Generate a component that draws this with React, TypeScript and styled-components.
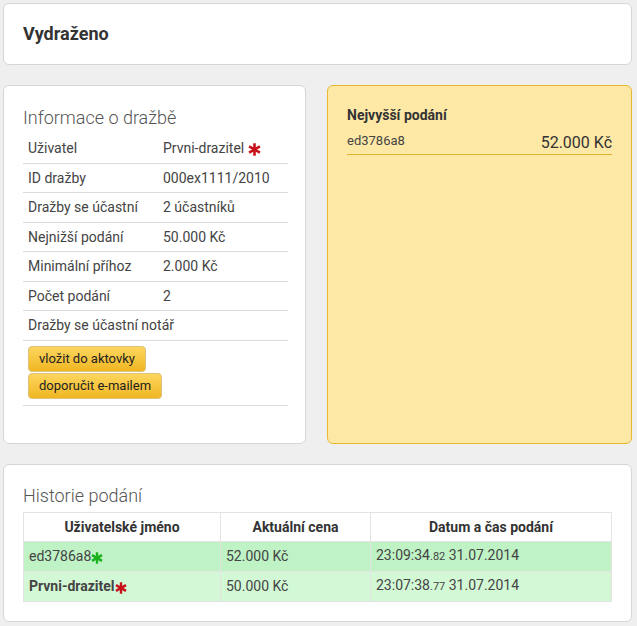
import styled, { createGlobalStyle } from "styled-components";

const GlobalStyle = createGlobalStyle`
    html, body {
        margin: 0;
        padding: 0;
        background: #efefef;
    }
    body {
        font-family: Roboto, "Liberation Sans", Arial, sans-serif;
        color: #444;
    }
`;

const Page = styled.div`
    display: flex;
    flex-direction: column;
    gap: 20px;
    padding: 3px 5px 5px 3px;
`;

const Panel = styled.div`
    background: #fff;
    border: 1px solid #d6d6d6;
    border-radius: 6px;
    padding: 20px 19px 19px 19px;
`;

const HeaderPanel = styled(Panel)`
    padding: 20px 19px;
`;

const HistoryPanel = styled(Panel)`
    padding: 19px 19px 19px 19px;
`;

const PageTitle = styled.h1`
    margin: 0;
    font-size: 18px;
    line-height: 20px;
    font-weight: 700;
    color: #333;
`;

const Columns = styled.div`
    display: grid;
    grid-template-columns: 303px 305px;
    gap: 21px;
`;

const InfoPanel = styled(Panel)`
    padding: 20px 17px 37px 19px;
`;

const SectionTitle = styled.h2`
    margin: 0 0 4px;
    font-size: 18px;
    line-height: 24px;
    font-weight: 300;
    color: #555;
`;

const InfoTable = styled.table`
    width: 100%;
    border-collapse: collapse;
    font-size: 14px;
    color: #444;

    td {
        height: 28.5px;
        padding: 0 5px;
        line-height: 20px;
        border-bottom: 1px solid #dcdcdc;
        vertical-align: middle;
    }
    td:first-child {
        width: 125px;
    }
`;

const ButtonCell = styled.td`
    && {
        padding: 5px 5px 6px;
    }
`;

const ButtonStack = styled.div`
    display: flex;
    flex-direction: column;
    align-items: flex-start;
    gap: 1px;
`;

const YellowButton = styled.button`
    height: 26px;
    padding: 0 10px;
    font-family: Roboto, "Liberation Sans", Arial, sans-serif;
    font-size: 13px;
    color: #222;
    background: linear-gradient(#fdd65f, #f0b622);
    border: 1px solid #dcc27a;
    border-radius: 4px;
    cursor: pointer;
`;

const BidPanel = styled.div`
    background: #fee8a6;
    border: 1px solid #eab731;
    border-radius: 6px;
    padding: 20px 19px;
`;

const BidTitle = styled.h3`
    margin: 0;
    font-size: 14px;
    line-height: 18px;
    font-weight: 700;
    color: #333;
`;

const BidRow = styled.div`
    display: flex;
    justify-content: space-between;
    align-items: flex-start;
    margin-top: 8px;
    border-bottom: 1px solid #e3b22c;
`;

const BidUser = styled.span`
    font-size: 13px;
    line-height: 18px;
    color: #444;
`;

const BidPrice = styled.span`
    font-size: 16px;
    line-height: 22px;
    color: #333;
`;

const HistoryTable = styled.table`
    width: 100%;
    border-collapse: collapse;
    font-size: 14px;
    color: #444;

    th, td {
        border: 1px solid #e3e3e3;
        padding: 0 5px;
        line-height: 20px;
        vertical-align: middle;
    }
    th {
        height: 28px;
        font-weight: 700;
        color: #333;
        text-align: center;
        background: #fff;
    }
    td {
        height: 29px;
    }
`;

const HistoryRow = styled.tr<{ $tone: "top" | "other" }>`
    background: ${({ $tone }) => ($tone === "top" ? "#bff2c5" : "#d3f8d6")};
`;

const Millis = styled.span`
    font-size: 11px;
`;

const StarMark = styled.svg<{ $gap: number }>`
    display: inline-block;
    vertical-align: -3px;
    margin-left: ${({ $gap }) => $gap}px;
`;

function Star({ color, size = 13, gap = 1 }: { color: string; size?: number; gap?: number }) {
    return (
        <StarMark $gap={gap} width={size} height={size} viewBox="0 0 12 12">
            <g stroke={color} strokeWidth="2.4" strokeLinecap="butt">
                <line x1="6" y1="0.3" x2="6" y2="11.7" />
                <line x1="1" y1="3.1" x2="11" y2="8.9" />
                <line x1="1" y1="8.9" x2="11" y2="3.1" />
            </g>
        </StarMark>
    );
}

const info: Array<[string, React.ReactNode]> = [
    ["Uživatel", <>Prvni-drazitel<Star color="#c8101a" size={13} gap={4} /></>],
    ["ID dražby", "000ex1111/2010"],
    ["Dražby se účastní", "2 účastníků"],
    ["Nejnižší podání", "50.000 Kč"],
    ["Minimální příhoz", "2.000 Kč"],
    ["Počet podání", "2"],
];

export default function App() {
    return (
        <>
            <GlobalStyle />
            <Page>
                <HeaderPanel>
                    <PageTitle>Vydraženo</PageTitle>
                </HeaderPanel>
                <Columns>
                    <InfoPanel>
                        <SectionTitle>Informace o dražbě</SectionTitle>
                        <InfoTable>
                            <tbody>
                                {info.map(([label, value]) => (
                                    <tr key={label}>
                                        <td>{label}</td>
                                        <td>{value}</td>
                                    </tr>
                                ))}
                                <tr>
                                    <td colSpan={2}>Dražby se účastní notář</td>
                                </tr>
                                <tr>
                                    <ButtonCell colSpan={2}>
                                        <ButtonStack>
                                            <YellowButton>vložit do aktovky</YellowButton>
                                            <YellowButton>doporučit e-mailem</YellowButton>
                                        </ButtonStack>
                                    </ButtonCell>
                                </tr>
                            </tbody>
                        </InfoTable>
                    </InfoPanel>
                    <BidPanel>
                        <BidTitle>Nejvyšší podání</BidTitle>
                        <BidRow>
                            <BidUser>ed3786a8</BidUser>
                            <BidPrice>52.000 Kč</BidPrice>
                        </BidRow>
                    </BidPanel>
                </Columns>
                <HistoryPanel>
                    <SectionTitle>Historie podání</SectionTitle>
                    <HistoryTable>
                        <colgroup>
                            <col style={{ width: 197 }} />
                            <col style={{ width: 150 }} />
                            <col />
                        </colgroup>
                        <thead>
                            <tr>
                                <th>Uživatelské jméno</th>
                                <th>Aktuální cena</th>
                                <th>Datum a čas podání</th>
                            </tr>
                        </thead>
                        <tbody>
                            <HistoryRow $tone="top">
                                <td>ed3786a8<Star color="#19b21e" size={12} gap={0} /></td>
                                <td>52.000 Kč</td>
                                <td>23:09:34<Millis>.82</Millis> 31.07.2014</td>
                            </HistoryRow>
                            <HistoryRow $tone="other">
                                <td><b>Prvni-drazitel</b><Star color="#c8101a" size={12} gap={0} /></td>
                                <td>50.000 Kč</td>
                                <td>23:07:38<Millis>.77</Millis> 31.07.2014</td>
                            </HistoryRow>
                        </tbody>
                    </HistoryTable>
                </HistoryPanel>
            </Page>
        </>
    );
}
